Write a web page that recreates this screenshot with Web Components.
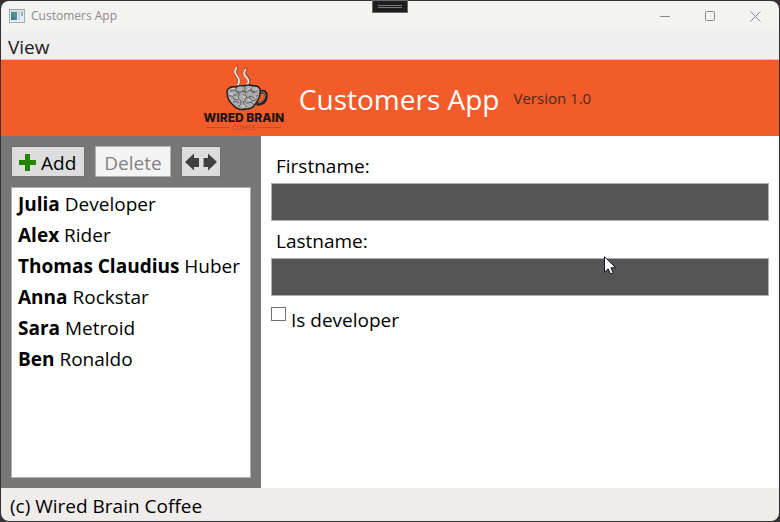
<!DOCTYPE html>
<html lang="en">
<head>
<meta charset="utf-8">
<title>Customers App</title>
<style>
  html, body { margin: 0; height: 100%; background: #343132; }
  body { font: 19px/28px "Open Sans", "Noto Sans", sans-serif; color: #000; }
</style>
</head>
<body>
<app-window></app-window>
<script>
const define = (name, html, setup) => customElements.define(name, class extends HTMLElement {
  connectedCallback() {
    if (this.shadowRoot) return;
    const root = this.attachShadow({ mode: 'open' });
    const template = document.createElement('template');
    template.innerHTML = html;
    root.append(template.content.cloneNode(true));
    if (setup) setup(root, this);
  }
});

define('title-bar', `
  <style>
    :host { display: flex; align-items: center; height: 30px; padding: 0 1px 0 8px; background: #f3f3f2; color: #8b8b8b; font-size: 12px; line-height: 16px; }
    .name { flex: 1; margin-left: 6px; }
    svg { display: block; }
    button { width: 45px; height: 30px; padding: 0; border: 0; background: none; display: grid; place-items: center; }
  </style>
  <svg width="16" height="14" viewBox="0 0 16 14">
    <rect x=".5" y=".5" width="15" height="13" fill="#e9edef" stroke="#a3aab0"/>
    <path d="M1 2h14" stroke="#c3cbd0"/>
    <rect x="2" y="3" width="6" height="8" fill="#4d9387"/>
    <path d="M2 11V5l5 6z" fill="#4a7599"/>
    <rect x="9" y="3" width="2" height="8" fill="#c5d4de"/>
    <rect x="12" y="3" width="2" height="4" fill="#88b3bd"/>
  </svg>
  <span class="name">Customers App</span>
  <button aria-label="Minimize"><svg width="11" height="11" fill="none" stroke="#8b8b8b"><path d="M0 5.500h10"/></svg></button>
  <button aria-label="Maximize"><svg width="11" height="11" fill="none" stroke="#85888b"><rect x=".5" y=".5" width="9" height="9" rx="1"/></svg></button>
  <button aria-label="Close"><svg width="11" height="11" fill="none" stroke="#85888b"><path d="M.5.5l10 10M10.500.5l-10 10"/></svg></button>
`);

define('menu-bar', `
  <style>
    :host { display: flex; align-items: center; height: 28px; padding: 0 7px; background: #efefef; border-bottom: 1px solid #d3c8c3; }
    button { padding: 4px 0 0; border: 0; background: none; font: inherit; color: #1a1a1a; }
  </style>
  <button>View</button>
`);

define('brand-logo', `
  <style>
    :host { display: grid; justify-items: center; width: 90px; color: #1c1512; font: 800 12px/14px Inter, sans-serif; }
    svg { display: block; margin-left: 6px; }
    .sub { display: grid; grid-template-columns: 24px auto 24px; align-items: center; gap: 2px; font: 400 6px/6px Inter, sans-serif; color: #b74c29; }
    .sub::before, .sub::after { content: ""; height: 1px; background: #c44d24; }
  </style>
  <svg width="42" height="45" viewBox="0 0 42 45" role="img" aria-label="Coffee cup">
    <g fill="none" stroke-linecap="round">
      <path d="M11 2q-3 4 0 8t1 9M20 3q-3 4 1 8t0 8" stroke="#8a4a35" stroke-width="3"/>
      <path d="M10.500 2q-3 4 .5 8t1 9M19.500 3.500q-3 4 1 8t0 7.500" stroke="#ece4df" stroke-width="1.800"/>
      <path d="M34 26q6-2 6 4 0 7-8 8" stroke="#24201e" stroke-width="3.500"/>
      <path d="M35 26q5-1 4 4-1 6-6 7" stroke="#98918d" stroke-width="1"/>
    </g>
    <path d="M2 23q3-3 8-2 4-2 8-1 5-2 9 0 5-1 7 3 1 8-4 14-3 6-10 6-8 2-13-4-6-5-6-13 0-2 1-3z" fill="#acacac" stroke="#211e1d" stroke-width="1.400"/>
    <path d="M4 25q5-2 7 1 4-3 7-1M2 30q5-1 6 3l4 1M10 22q-1 4 3 5l4-2 3 2 4-3 5 2M7 29q4 1 6-2M14 28q-4 4 1 7 1 4-3 6M17 28q4 1 4 4l4-2 3 2 4-3M20 32q-3 3 1 5l4-1 3 3M25 22q-1 3 2 5l4-2M17 35q0 4 4 6M24 31q-1 3 3 4l4-2M7 36q3-2 6 1M19 21q-1 3 1 6" fill="none" stroke="#4c4a49" stroke-width=".8"/>
    <path d="M6 23q2-1 3 0M4 28h3M13 24h3M22 23q2-1 2 0M29 23h2M17 31h2M10 32h2M22 34h3M16 40h3M28 31h2" fill="none" stroke="#ddd" stroke-width="1"/>
  </svg>
  <span>WIRED BRAIN</span>
  <span class="sub">COFFEE</span>
`);

define('app-header', `
  <style>
    :host { display: flex; align-items: center; justify-content: center; height: 76px; padding-left: 10px; background: #f25b2a; }
    h1 { margin: 2px 14px 0 10px; font-size: 28px; line-height: 40px; font-weight: 400; color: #fff; }
    span { font-size: 15px; line-height: 20px; color: #4b2a20; }
  </style>
  <brand-logo></brand-logo>
  <h1>Customers App</h1>
  <span>Version 1.0</span>
`);

define('tool-button', `
  <style>
    :host { display: block; }
    button { box-sizing: border-box; display: flex; align-items: center; gap: 5px; height: 31px; padding: 2px 8px 0 7px; border: 1px solid #707070; background: #ddd; font: inherit; color: #000; white-space: nowrap; }
    :host([icon]) button { padding: 0 3px; }
    button:disabled { padding: 2px 8px 0; background: #f4f4f4; border-color: #adb2b5; color: #838383; }
  </style>
  <button><slot></slot></button>
`, (root, host) => {
  const b = root.querySelector('button');
  b.disabled = host.hasAttribute('disabled');
  if (host.title) b.setAttribute('aria-label', host.title);
});

define('customer-row', `
  <style>
    :host { display: block; padding: 0 6px; line-height: 31px; white-space: nowrap; }
    b { font-weight: 700; }
  </style>
  <b><slot name="first"></slot></b> <slot></slot>
`);

define('customer-list', `
  <style>
    :host { box-sizing: border-box; display: flex; flex-direction: column; gap: 10px; padding: 10px; background: #777; }
    .tools { display: flex; gap: 10px; }
    .list { flex: 1; padding-top: 1px; border: 1px solid #abadb3; background: #fff; }
    svg { display: block; flex: none; }
  </style>
  <div class="tools">
    <tool-button><svg width="17" height="17" viewBox="0 0 17 17"><path d="M6 0h5v6h6v5h-6v6H6v-6H0V6h6z" fill="#228500"/></svg>Add</tool-button>
    <tool-button disabled>Delete</tool-button>
    <tool-button icon title="Move list"><svg width="32" height="18" viewBox="0 0 32 18" fill="#40403e"><path d="M0 9L9 .5V5h5v9H9v3.500zM32 9l-9-8.500V5h-4v9h4v3.500z"/><path d="M18 5h1v9h-1z" fill="#999"/></svg></tool-button>
  </div>
  <div class="list" role="list"></div>
`, root => {
  const list = root.querySelector('.list');
  for (const [first, last] of [['Julia', 'Developer'], ['Alex', 'Rider'], ['Thomas Claudius', 'Huber'], ['Anna', 'Rockstar'], ['Sara', 'Metroid'], ['Ben', 'Ronaldo']]) {
    const row = document.createElement('customer-row');
    row.setAttribute('role', 'listitem');
    row.innerHTML = `<span slot="first">${first}</span>${last}`;
    list.append(row);
  }
});

define('text-field', `
  <style>
    :host { display: grid; }
    label { padding: 6px 5px 3px; }
    input { box-sizing: border-box; width: 100%; height: 38px; padding: 0 6px; border: 1px solid #abadb3; background: #555; color: #fff; font: inherit; }
  </style>
  <label for="field"><slot></slot></label>
  <input id="field" type="text">
`);

define('customer-form', `
  <style>
    :host { display: flex; flex-direction: column; padding: 10px; background: #fff; }
    .check { display: flex; align-items: flex-start; gap: 5px; margin-top: 10px; }
    input { appearance: none; box-sizing: border-box; width: 15px; height: 14px; margin: 1px 0 0; border: 1px solid #707070; background: #fff; }
  </style>
  <text-field>Firstname:</text-field>
  <text-field>Lastname:</text-field>
  <div class="check"><input id="developer" type="checkbox"><label for="developer">Is developer</label></div>
`);

define('status-bar', `
  <style>:host { display: flex; align-items: center; height: 33px; padding: 2px 9px 0; box-sizing: border-box; background: #f0eceb; }</style>
  <span>(c) Wired Brain Coffee</span>
`);

define('app-window', `
  <style>
    :host { box-sizing: border-box; display: flex; min-height: 100vh; padding: 1px; position: relative; }
    .frame { flex: 1; display: flex; flex-direction: column; min-width: 0; border-radius: 8px; overflow: hidden; }
    main { flex: 1; display: grid; grid-template-columns: 260px 1fr; }
    .grip { position: absolute; top: 0; left: 50%; transform: translateX(-50%); box-sizing: border-box; width: 36px; height: 13px; border: 1px solid #6b6b68; background: #1e1e1e; }
    .cursor { position: absolute; left: 604px; top: 256px; }
    svg { display: block; }
  </style>
  <div class="frame">
    <title-bar></title-bar>
    <menu-bar></menu-bar>
    <app-header></app-header>
    <main><customer-list></customer-list><customer-form></customer-form></main>
    <status-bar></status-bar>
  </div>
  <div class="grip"><svg width="34" height="11"><path d="M5 4.500h24M5 6.500h24" stroke="#777774"/></svg></div>
  <svg class="cursor" width="13" height="20" viewBox="0 0 13 20"><path d="M.5.800v15.500l3.700-3.500 2.300 5.200 2.700-1.200-2.300-5h5z" fill="#fff" stroke="#15131f"/></svg>
`);
</script>
</body>
</html>
